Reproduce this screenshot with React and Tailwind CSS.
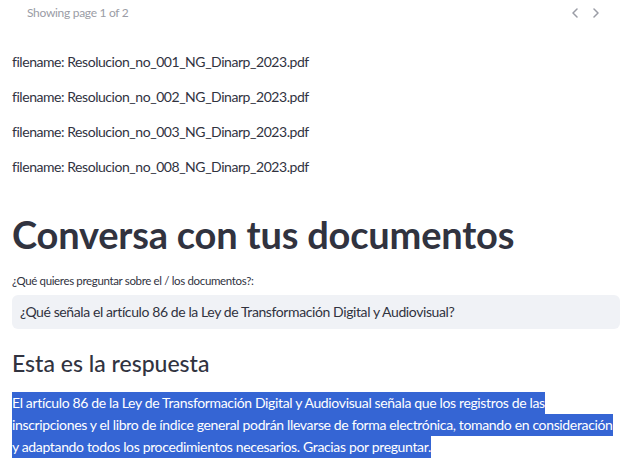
import React from "react";

function Chevron({ dir }) {
  return (
    <svg width="8" height="10" viewBox="0 0 8 10" fill="none">
      <polyline
        points={dir === "left" ? "6,1 2,5 6,9" : "2,1 6,5 2,9"}
        stroke="#9a9ca5"
        strokeWidth="1.5"
        strokeLinecap="round"
        strokeLinejoin="round"
      />
    </svg>
  );
}

export default function App() {
  const files = [
    "filename: Resolucion_no_001_NG_Dinarp_2023.pdf",
    "filename: Resolucion_no_002_NG_Dinarp_2023.pdf",
    "filename: Resolucion_no_003_NG_Dinarp_2023.pdf",
    "filename: Resolucion_no_008_NG_Dinarp_2023.pdf",
  ];
  return (
    <div className="w-[623px] h-[470px] overflow-hidden bg-white text-[#31333f] font-['Lato',sans-serif]">
      <div className="flex items-center justify-between h-[26px] pl-[27px] pr-[23px]">
        <span className="text-[12px] tracking-[-0.3px] text-[#9a9ca5]">Showing page 1 of 2</span>
        <div className="flex items-center gap-[13px]">
          <Chevron dir="left" />
          <Chevron dir="right" />
        </div>
      </div>
      <div className="pl-[12px] pr-[3px]">
        <div className="mt-[18px] flex flex-col text-[14px] tracking-[-0.45px]">
          {files.map((f) => (
            <div key={f} className="h-[35px] leading-[35px]">
              {f}
            </div>
          ))}
        </div>
        <h1 className="mt-[28px] text-[38px] font-bold leading-[1.2] tracking-[-0.2px] text-[#31333f]">
          Conversa con tus documentos
        </h1>
        <div className="mt-[15px] h-[16px] leading-[16px] text-[11.5px] tracking-[-0.35px]">
          ¿Qué quieres preguntar sobre el / los documentos?:
        </div>
        <div className="mt-[6px] h-[34px] rounded-[6px] bg-[#f0f2f6] flex items-center px-[8px] text-[14px] tracking-[-0.4px]">
          ¿Qué señala el artículo 86 de la Ley de Transformación Digital y Audiovisual?
        </div>
        <h3 className="mt-[21px] text-[23px] font-medium leading-[1.2]">
          Esta es la respuesta
        </h3>
        <div className="mt-[15px] flex flex-col items-start text-[14px] tracking-[-0.35px] text-white">
          <div className="h-[22px] leading-[22px] bg-[#3565d4] whitespace-nowrap">
            El artículo 86 de la Ley de Transformación Digital y Audiovisual señala que los registros de las
          </div>
          <div className="h-[22px] leading-[22px] bg-[#3565d4] whitespace-nowrap">
            inscripciones y el libro de índice general podrán llevarse de forma electrónica, tomando en consideración
          </div>
          <div className="h-[22px] leading-[22px] bg-[#3565d4] whitespace-nowrap">
            y adaptando todos los procedimientos necesarios. Gracias por preguntar.
          </div>
        </div>
      </div>
    </div>
  );
}
